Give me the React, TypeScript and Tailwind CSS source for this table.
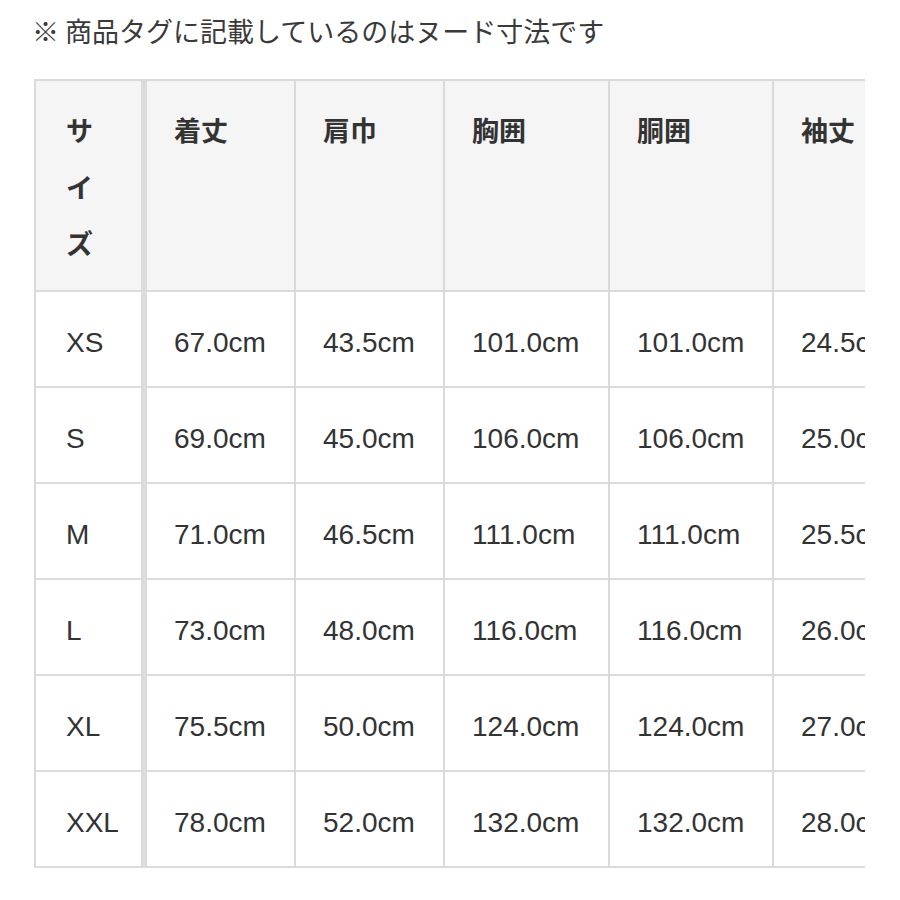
const HEADERS = ["着丈", "肩巾", "胸囲", "胴囲", "袖丈"];

const ROWS: { size: string; values: string[] }[] = [
  { size: "XS", values: ["67.0cm", "43.5cm", "101.0cm", "101.0cm", "24.5cm"] },
  { size: "S", values: ["69.0cm", "45.0cm", "106.0cm", "106.0cm", "25.0cm"] },
  { size: "M", values: ["71.0cm", "46.5cm", "111.0cm", "111.0cm", "25.5cm"] },
  { size: "L", values: ["73.0cm", "48.0cm", "116.0cm", "116.0cm", "26.0cm"] },
  { size: "XL", values: ["75.5cm", "50.0cm", "124.0cm", "124.0cm", "27.0cm"] },
  { size: "XXL", values: ["78.0cm", "52.0cm", "132.0cm", "132.0cm", "28.0cm"] },
];

export default function App() {
  return (
    <div
      className="min-h-[900px] bg-white text-[#333]"
      style={{ fontFamily: '"Liberation Sans", "Noto Sans CJK JP", sans-serif' }}
    >
      <div className="h-[79px] pl-[32px] pt-[11px]">
        <p
          className="text-[27px] leading-[40px] text-[#3a3a3a] whitespace-nowrap"
          style={{ fontFamily: '"Noto Sans CJK JP", sans-serif' }}
        >
          ※ 商品タグに記載しているのはヌード寸法です
        </p>
      </div>

      {/* table is clipped on the right, like the original */}
      <div className="ml-[34px] w-[831px] overflow-hidden">
        <div className="grid w-max grid-cols-[111px_149px_149px_165px_164px_150px] border-l-2 border-t-2 border-[#dadada]">
          <div className="h-[211px] border-b-2 border-r-[6px] border-[#dcdcdc] bg-[#f5f5f5] pl-[30px] pt-[23px]">
            <p className="w-[28px] text-[27px] font-bold leading-[56.5px]">
              サ<br />イ<br />ズ
            </p>
          </div>
          {HEADERS.map((h) => (
            <div
              key={h}
              className="h-[211px] border-b-2 border-r-2 border-[#dadada] bg-[#f5f5f5] pl-[27px] pt-[23px]"
            >
              <p className="whitespace-nowrap text-[27px] font-bold leading-[56.5px]">{h}</p>
            </div>
          ))}

          {ROWS.map((row) => (
            <div key={row.size} className="contents">
              <div className="flex h-[96px] items-center border-b-2 border-r-[6px] border-[#dcdcdc] pl-[30px] pt-[8px]">
                <span className="text-[28px] leading-none">{row.size}</span>
              </div>
              {row.values.map((v, i) => (
                <div
                  key={i}
                  className="flex h-[96px] items-center border-b-2 border-r-2 border-[#dadada] pl-[27px] pt-[8px]"
                >
                  <span className="whitespace-nowrap text-[28px] leading-none">{v}</span>
                </div>
              ))}
            </div>
          ))}
        </div>
      </div>
    </div>
  );
}
